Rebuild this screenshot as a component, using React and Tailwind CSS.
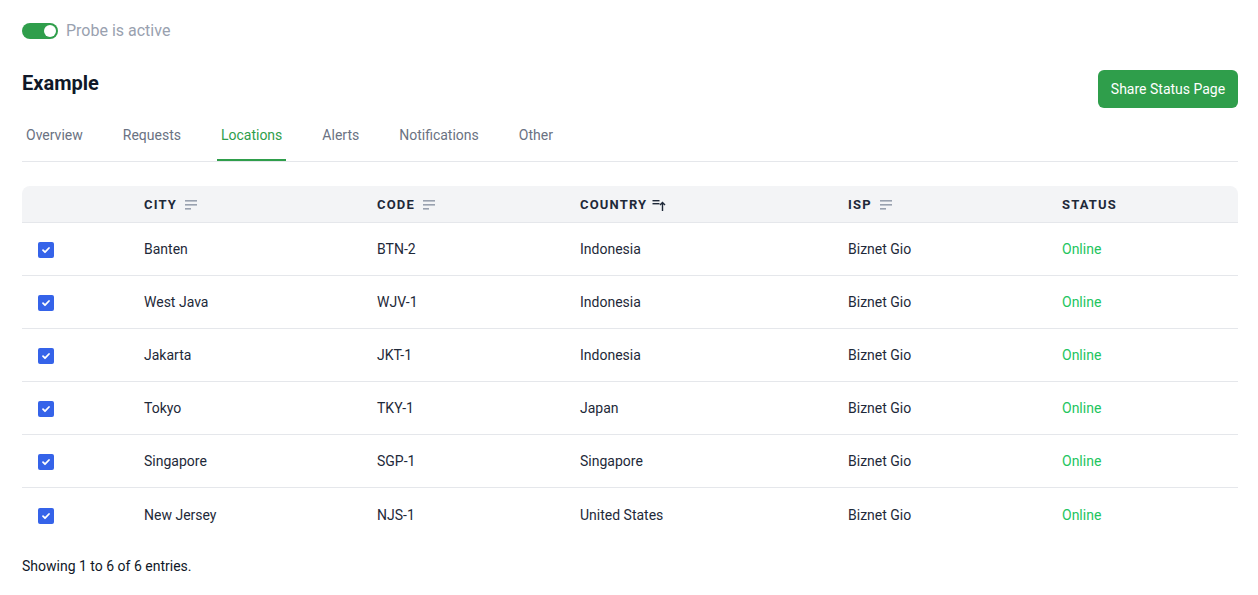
import React from 'react';

const rows = [
  { city: 'Banten', code: 'BTN-2', country: 'Indonesia', isp: 'Biznet Gio' },
  { city: 'West Java', code: 'WJV-1', country: 'Indonesia', isp: 'Biznet Gio' },
  { city: 'Jakarta', code: 'JKT-1', country: 'Indonesia', isp: 'Biznet Gio' },
  { city: 'Tokyo', code: 'TKY-1', country: 'Japan', isp: 'Biznet Gio' },
  { city: 'Singapore', code: 'SGP-1', country: 'Singapore', isp: 'Biznet Gio' },
  { city: 'New Jersey', code: 'NJS-1', country: 'United States', isp: 'Biznet Gio' },
];

const tabs = ['Overview', 'Requests', 'Locations', 'Alerts', 'Notifications', 'Other'];

const cols = 'grid grid-cols-[106px_233px_203px_268px_214px_1fr]';

function SortIcon() {
  return (
    <svg width="14" height="12" viewBox="0 0 14 12" className="ml-[7px] text-gray-400">
      <rect x="1" y="1" width="12" height="1.6" fill="currentColor" />
      <rect x="1" y="5" width="12" height="1.6" fill="currentColor" />
      <rect x="1" y="9" width="6" height="1.6" fill="currentColor" />
    </svg>
  );
}

function SortUpIcon() {
  return (
    <svg width="14" height="14" viewBox="0 0 14 14" className="ml-[5px] text-gray-800">
      <rect x="0.5" y="2" width="7" height="1.4" fill="currentColor" />
      <rect x="0.5" y="5" width="7" height="1.4" fill="currentColor" />
      <path d="M10.5 13V4.5M8 7l2.5-2.6L13 7" stroke="currentColor" strokeWidth="1.4" fill="none" />
    </svg>
  );
}

function Checkbox() {
  return (
    <span className="flex h-4 w-4 items-center justify-center rounded-[2px] bg-[#3563e9]">
      <svg width="10" height="10" viewBox="0 0 10 10">
        <path d="M2 5.2l2 2 4-4.2" stroke="white" strokeWidth="1.8" fill="none" strokeLinecap="round" strokeLinejoin="round" />
      </svg>
    </span>
  );
}

export default function App() {
  return (
    <div className="min-h-screen bg-white pl-[22px] pr-[20px] pt-[19px] font-['Roboto',sans-serif] text-gray-700">
      {/* TOGGLE */}
      <div className="flex items-center gap-2">
        <span className="flex h-4 w-9 items-center justify-end rounded-full bg-[#2f9e4b] px-[2px]">
          <span className="h-3 w-3 rounded-full bg-white" />
        </span>
        <span className="text-base text-gray-400">Probe is active</span>
      </div>

      {/* HEADER */}
      <div className="mt-[18px] flex items-start justify-between">
        <h1 className="pt-[8px] text-xl font-bold text-gray-900">Example</h1>
        <button className="mt-[9px] h-[38px] w-[140px] rounded-md bg-[#2f9e4b] text-sm text-white">
          Share Status Page
        </button>
      </div>

      {/* TABS */}
      <div className="mt-[13px] flex gap-[32px] border-b border-gray-200">
        {tabs.map((t) => (
          <div
            key={t}
            className={
              t === 'Locations'
                ? 'border-b-2 border-[#2f9e4b] px-1 pb-[14px] pt-[4px] text-sm text-[#2f9e4b]'
                : 'border-b-2 border-transparent px-1 pb-[14px] pt-[4px] text-sm text-gray-500'
            }
          >
            {t}
          </div>
        ))}
      </div>

      {/* TABLE */}
      <div className="mt-6">
        <div className={`${cols} h-[37px] items-center rounded-t-lg border-b border-gray-200 bg-gray-100 pt-[1px] text-[13px] font-bold uppercase tracking-[0.09em] text-gray-800`}>
          <div />
          <div className="flex items-center px-4">City<SortIcon /></div>
          <div className="flex items-center px-4">Code<SortIcon /></div>
          <div className="flex items-center px-4">Country<SortUpIcon /></div>
          <div className="flex items-center px-4">ISP<SortIcon /></div>
          <div className="px-4">Status</div>
        </div>
        {rows.map((r, i) => (
          <div
            key={r.code}
            className={`${cols} h-[53px] items-center text-sm text-gray-800 ${i < rows.length - 1 ? 'border-b border-gray-200' : ''}`}
          >
            <div className="px-4 pt-[2px]"><Checkbox /></div>
            <div className="px-4">{r.city}</div>
            <div className="px-4">{r.code}</div>
            <div className="px-4">{r.country}</div>
            <div className="px-4">{r.isp}</div>
            <div className="px-4 text-[#22c55e]">Online</div>
          </div>
        ))}
      </div>

      <p className="mt-[15px] text-sm text-gray-900">Showing 1 to 6 of 6 entries.</p>
    </div>
  );
}
